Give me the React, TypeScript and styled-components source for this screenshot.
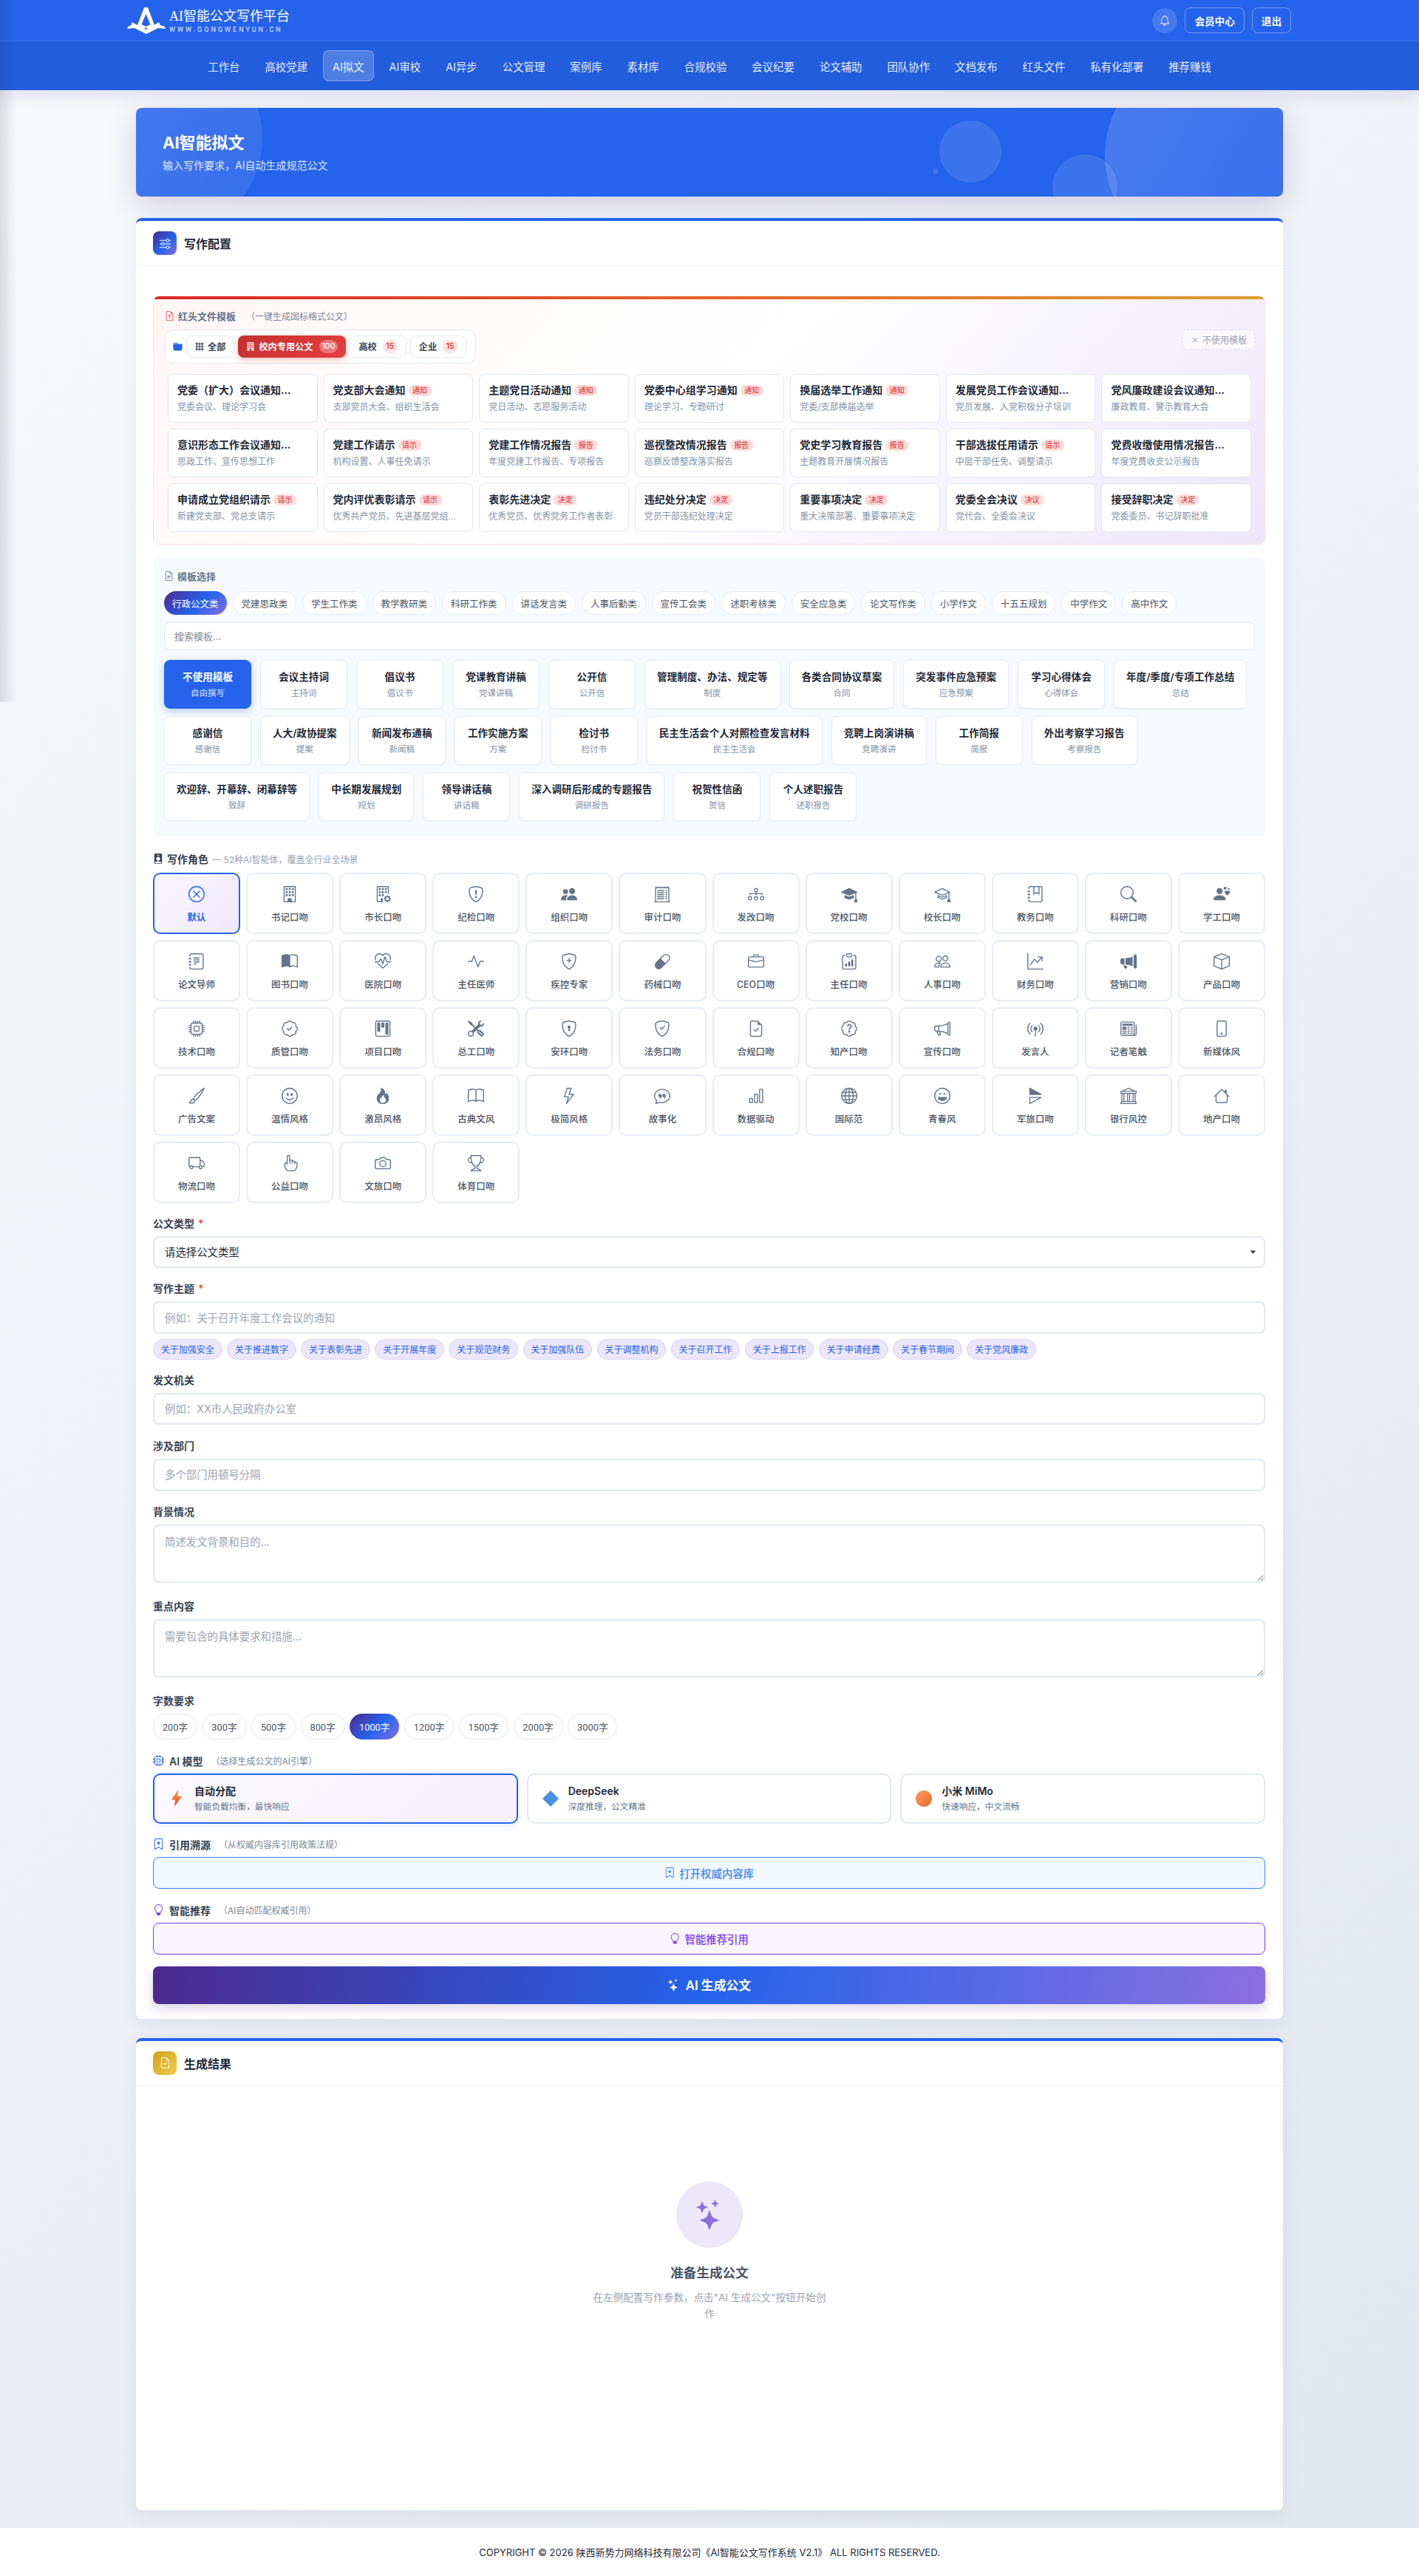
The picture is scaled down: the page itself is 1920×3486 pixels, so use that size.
import React from 'react'
import styled, { createGlobalStyle } from 'styled-components'
import type { IconType } from 'react-icons'
import {
    BsActivity, BsBank, BsBarChart, BsBell, BsBook, BsBookHalf, BsBookmarkStar, BsBox, BsBriefcase, BsBroadcastPin,
    BsBrush, BsBuilding, BsBuildingFill, BsBuildingGear, BsCamera, BsCapsule, BsCaretDownFill, BsChatQuote,
    BsClipboardData, BsCpu, BsDiagram3, BsEmojiLaughing, BsEmojiSmile, BsFileEarmarkArrowUp, BsFileEarmarkCheck,
    BsFileEarmarkText, BsFire, BsFolderFill, BsGlobe, BsGraphUpArrow, BsGrid3X3GapFill, BsHandIndex, BsHeartPulse,
    BsHouse, BsJournalBookmark, BsJournalText, BsKanban, BsLightbulb, BsLightning, BsMegaphone, BsMegaphoneFill,
    BsMortarboard, BsMortarboardFill, BsNewspaper, BsPatchCheck, BsPatchQuestion, BsPeople, BsPeopleFill,
    BsPersonBadgeFill, BsPersonHearts, BsPhone, BsReceiptCutoff, BsSearch, BsShieldCheck, BsShieldExclamation,
    BsShieldLock, BsShieldPlus, BsSliders, BsStars, BsSymmetryHorizontal, BsTools, BsTrophy, BsTruck, BsX, BsXCircle,
} from 'react-icons/bs'

// ─── Global ───────────────────────────────────────────────────────────────────

const GlobalStyle = createGlobalStyle`
    * { box-sizing: border-box; }
    html, body { margin: 0; padding: 0; }
    body {
        font-family: Inter, 'Noto Sans CJK SC', sans-serif;
        color: #1f2937;
    }
    input, select, textarea, button { font-family: inherit; }
    ::placeholder { color: #9ca3af; opacity: 1; }
`

const Page = styled.div`
    position: relative;
    height: 3486px;
    overflow: hidden;
    background: linear-gradient(135deg, #f8fafc 0%, #e2e6ee 100%);
    display: flex;
    flex-direction: column;
`

const EdgeShade = styled.div`
    position: absolute;
    left: 0;
    top: 0;
    width: 22px;
    height: 950px;
    background: linear-gradient(90deg, rgba(30, 41, 59, 0.14), rgba(30, 41, 59, 0));
    pointer-events: none;
    z-index: 5;
`

// ─── Header ───────────────────────────────────────────────────────────────────

const Header = styled.header`
    background: #2563eb;
    box-shadow: 0 4px 24px rgba(67, 56, 160, 0.16);
    color: #fff;
`

const TopBar = styled.div`
    height: 56px;
    padding: 0 173px 0 172px;
    display: flex;
    align-items: center;
    justify-content: space-between;
    border-bottom: 1px solid rgba(255, 255, 255, 0.12);
`

const Brand = styled.div`
    display: flex;
    align-items: center;
    gap: 5px;
`

const BrandText = styled.div`
    display: flex;
    flex-direction: column;
`

const BrandName = styled.div`
    font-size: 18px;
    line-height: 24px;
    font-family: 'Liberation Serif', 'Noto Sans CJK SC', serif;
    font-weight: 400;
    white-space: nowrap;
`

const BrandUrl = styled.div`
    font-size: 9px;
    line-height: 12px;
    letter-spacing: 3.05px;
    font-family: Roboto, sans-serif;
    opacity: 0.9;
    white-space: nowrap;
`

const TopActions = styled.div`
    display: flex;
    align-items: center;
    gap: 10px;
`

const BellButton = styled.button`
    width: 34px;
    height: 34px;
    border: none;
    border-radius: 50%;
    background: rgba(255, 255, 255, 0.14);
    color: #fff;
    display: flex;
    align-items: center;
    justify-content: center;
    font-size: 14px;
    padding: 0;
`

const HeadButton = styled.button`
    height: 35px;
    padding: 0 12px;
    border: 1.5px solid rgba(255, 255, 255, 0.35);
    border-radius: 8px;
    background: transparent;
    color: #fff;
    font-size: 13.6px;
    font-weight: 600;
    white-space: nowrap;
`

const Nav = styled.nav`
    height: 66px;
    background: #225ddd;
    display: flex;
    align-items: center;
    justify-content: center;
    gap: 8px;
`

const NavItem = styled.a<{ $active?: boolean }>`
    height: 42px;
    padding: 0 12px;
    display: flex;
    align-items: center;
    font-size: 14.4px;
    color: rgba(255, 255, 255, 0.92);
    border-radius: 8px;
    white-space: nowrap;
    border: 1px solid ${p => p.$active ? 'rgba(255, 255, 255, 0.3)' : 'transparent'};
    background: ${p => p.$active ? 'rgba(255, 255, 255, 0.2)' : 'transparent'};
`

// ─── Main ─────────────────────────────────────────────────────────────────────

const Main = styled.main`
    flex: 1;
    padding: 24px 184px 0;
`

const Hero = styled.section`
    position: relative;
    height: 120px;
    padding: 32px 36px;
    background: #2563eb;
    border-radius: 8px;
    overflow: hidden;
    color: #fff;
`

const HeroShadow = styled.div`
    margin-bottom: 29px;
    border-radius: 8px;
    box-shadow: 0 12px 40px rgba(76, 42, 142, 0.2);
`

const HeroCircle = styled.span<{ $x: number; $y: number; $size: number; $faded?: boolean }>`
    position: absolute;
    left: ${p => p.$x - p.$size / 2}px;
    top: ${p => p.$y - p.$size / 2}px;
    width: ${p => p.$size}px;
    height: ${p => p.$size}px;
    border-radius: 50%;
    background: ${p => p.$faded
        ? 'linear-gradient(120deg, rgba(255, 255, 255, 0.17), rgba(255, 255, 255, 0.07))'
        : 'rgba(255, 255, 255, 0.11)'};
`

const HeroTitle = styled.h1`
    position: relative;
    margin: 0 0 5px;
    font-size: 22px;
    line-height: 31px;
    font-weight: 700;
`

const HeroSub = styled.p`
    position: relative;
    margin: 0;
    font-size: 14px;
    line-height: 20px;
    opacity: 0.85;
`

const Card = styled.section`
    background: #fff;
    border-top: 4px solid #2563eb;
    border-radius: 8px;
    box-shadow: 0 6px 24px rgba(60, 60, 120, 0.08);
`

const CardHead = styled.div`
    height: 61px;
    padding: 0 23px;
    display: flex;
    align-items: center;
    gap: 10px;
    border-bottom: 1px solid #eef0f4;
`

const CardIcon = styled.span<{ $gold?: boolean }>`
    width: 32px;
    height: 32px;
    border-radius: 8px;
    color: #fff;
    font-size: 15px;
    display: flex;
    align-items: center;
    justify-content: center;
    background: ${p => p.$gold
        ? 'linear-gradient(135deg, #d4a017, #f0cb4f)'
        : 'linear-gradient(135deg, #4c2a8e, #2563eb 55%, #8a6be0)'};
`

const CardTitle = styled.h2`
    margin: 0;
    font-size: 16px;
    font-weight: 600;
    color: #1f2937;
`

const ConfigBody = styled.div`
    padding: 40px 24px 20px 23px;
`

// ─── Red header templates ─────────────────────────────────────────────────────

const RedBox = styled.div`
    position: relative;
    height: 337px;
    margin-bottom: 18px;
    padding: 16px 18px 0 15px;
    border: 1px solid #fde2e2;
    border-radius: 8px;
    overflow: hidden;
    background: linear-gradient(135deg, #fff6f6 0%, #ffffff 50%, #ece6fa 100%);
`

const RedBar = styled.span`
    position: absolute;
    left: 0;
    right: 0;
    top: 0;
    height: 4px;
    background: linear-gradient(90deg, #dc2626, #e4682a 55%, #d9a032);
`

const SectionLabel = styled.div`
    display: flex;
    align-items: center;
    gap: 5px;
    height: 20px;
    font-size: 13px;
    font-weight: 600;
    color: #64748b;
`

const LabelNote = styled.span`
    margin-left: 9px;
    font-size: 12px;
    font-weight: 400;
    color: #7b8798;
`

const FilterRow = styled.div`
    display: flex;
    align-items: flex-start;
    justify-content: space-between;
    margin-top: 9px;
`

const FilterBar = styled.div`
    height: 46px;
    padding: 0 12px 0 10px;
    display: flex;
    align-items: center;
    gap: 5px;
    background: #fff;
    border: 1px solid #e2e8f0;
    border-radius: 12px;
    color: #2563eb;
    font-size: 13px;
`

const FilterTab = styled.button<{ $active?: boolean }>`
    height: 30px;
    padding: 0 11px;
    display: flex;
    align-items: center;
    gap: 5px;
    font-size: 12.2px;
    font-weight: 600;
    white-space: nowrap;
    border-radius: 8px;
    border: ${p => p.$active ? 'none' : '1px solid #e2e8f0'};
    background: ${p => p.$active ? 'linear-gradient(135deg, #c53030, #e53e3e)' : '#fff'};
    color: ${p => p.$active ? '#fff' : '#374151'};
    box-shadow: ${p => p.$active ? '0 3px 8px rgba(220, 38, 38, 0.3)' : 'none'};
`

const TabIcon = styled.span`
    display: flex;
    font-size: 12px;
    color: inherit;
    opacity: 0.85;
`

const TabCount = styled.span<{ $active?: boolean }>`
    min-width: 20px;
    height: 18px;
    margin-left: 3px;
    padding: 0 4px;
    border-radius: 9px;
    font-size: 10.5px;
    font-weight: 500;
    line-height: 18px;
    text-align: center;
    background: ${p => p.$active ? 'rgba(255, 255, 255, 0.3)' : '#fee2e2'};
    color: ${p => p.$active ? '#fff' : '#dc2626'};
`

const NoTemplate = styled.button`
    height: 27px;
    margin-right: -5px;
    padding: 0 10px 0 8px;
    display: flex;
    align-items: center;
    gap: 2px;
    background: rgba(255, 255, 255, 0.55);
    border: 1px dashed #dce2ea;
    border-radius: 6px;
    color: #9ca3af;
    font-size: 12px;
`

const RedGrid = styled.div`
    display: grid;
    grid-template-columns: repeat(7, minmax(0, 1fr));
    grid-auto-rows: 66px;
    gap: 8px;
    margin: 14px 0 0 4px;
`

const RedCard = styled.div`
    padding: 0 12px;
    display: flex;
    flex-direction: column;
    justify-content: center;
    gap: 4px;
    background: #fff;
    border: 1px solid #e2e8f0;
    border-radius: 8px;
`

const RedTitle = styled.div`
    display: flex;
    align-items: center;
    gap: 4px;
    font-size: 14px;
    line-height: 20px;
    font-weight: 600;
    color: #1f2937;
    white-space: nowrap;
`

const RedBadge = styled.span`
    padding: 0 5.5px;
    border-radius: 7px;
    font-size: 10px;
    line-height: 15px;
    font-weight: 400;
    background: #fddcdc;
    color: #dc2626;
`

const RedSub = styled.div`
    font-size: 12px;
    line-height: 18px;
    color: #8492a6;
    white-space: nowrap;
`

// ─── Template picker ──────────────────────────────────────────────────────────

const PickerBox = styled.div`
    height: 377px;
    margin-bottom: 20px;
    padding: 14px 14px 0 15px;
    background: #f6f9fd;
    border-radius: 10px;
`

const Pills = styled.div`
    display: flex;
    gap: 8px;
    margin-top: 11px;
`

const Pill = styled.button<{ $active?: boolean }>`
    height: 32px;
    padding: 0 11px;
    font-size: 12.5px;
    white-space: nowrap;
    border-radius: 16px;
    border: ${p => p.$active ? 'none' : '1px solid #e8edf4'};
    background: ${p => p.$active ? 'linear-gradient(135deg, #4c2a8e, #2563eb 55%, #8a6be0)' : '#fff'};
    color: ${p => p.$active ? '#fff' : '#4b5563'};
`

const SearchInput = styled.input`
    display: block;
    width: 100%;
    height: 38px;
    margin-top: 10px;
    padding: 0 13px;
    background: #fff;
    border: 1px solid #e2e8f0;
    border-radius: 8px;
    font-size: 13px;
    outline: none;

    &::placeholder { color: #858b94; }
`

const TemplateWrap = styled.div`
    display: flex;
    flex-wrap: wrap;
    gap: 10px 12px;
    margin-top: 13px;
`

const TemplateCard = styled.div<{ $active?: boolean }>`
    min-width: 118px;
    height: 66px;
    padding: 0 16px;
    display: flex;
    flex-direction: column;
    align-items: center;
    justify-content: center;
    gap: 4px;
    border-radius: 8px;
    border: 1px solid ${p => p.$active ? '#2563eb' : '#e8edf4'};
    background: ${p => p.$active ? '#2563eb' : '#fff'};
    box-shadow: ${p => p.$active ? '0 3px 10px rgba(37, 99, 235, 0.3)' : '0 1px 3px rgba(15, 23, 42, 0.04)'};
`

const TemplateName = styled.div<{ $active?: boolean }>`
    font-size: 13.6px;
    line-height: 20px;
    font-weight: 600;
    white-space: nowrap;
    color: ${p => p.$active ? '#fff' : '#1f2937'};
`

const TemplateSub = styled.div<{ $active?: boolean }>`
    font-size: 11.5px;
    line-height: 16px;
    color: ${p => p.$active ? 'rgba(255, 255, 255, 0.85)' : '#8492a6'};
`

// ─── Roles ────────────────────────────────────────────────────────────────────

const RoleLabel = styled.div`
    display: flex;
    align-items: center;
    gap: 5px;
    height: 20px;
    font-size: 14px;
    font-weight: 600;
    color: #374151;
`

const RoleNote = styled.span`
    font-size: 12px;
    font-weight: 400;
    color: #94a3b8;
`

const RoleGrid = styled.div`
    display: grid;
    grid-template-columns: repeat(12, minmax(0, 1fr));
    grid-auto-rows: 83px;
    gap: 8px;
    margin: 9px 0 18px;
`

const RoleCard = styled.div<{ $active?: boolean }>`
    padding-top: 16px;
    display: flex;
    flex-direction: column;
    align-items: center;
    gap: 11px;
    border-radius: 10px;
    border: 2px solid ${p => p.$active ? '#2563eb' : '#e8ecf3'};
    background: ${p => p.$active ? 'linear-gradient(135deg, #faf7ff, #efe8fd)' : '#fff'};
    color: ${p => p.$active ? '#2563eb' : '#64748b'};
    font-size: 22px;
`

const RoleIcon = styled.span`
    display: flex;
    height: 22px;
`

const RoleName = styled.div<{ $active?: boolean }>`
    font-size: 12.5px;
    line-height: 20px;
    font-weight: ${p => p.$active ? 600 : 500};
    color: ${p => p.$active ? '#2563eb' : '#4b5563'};
`

// ─── Form ─────────────────────────────────────────────────────────────────────

const Group = styled.div<{ $gap?: number }>`
    margin-bottom: ${p => p.$gap ?? 18}px;
`

const Label = styled.label`
    display: block;
    height: 20px;
    margin-bottom: 7px;
    font-size: 14px;
    line-height: 20px;
    font-weight: 600;
    color: #374151;
`

const Required = styled.span`
    margin-left: 5px;
    color: #ef4444;
`

const SelectWrap = styled.div`
    position: relative;
    color: #374151;
    font-size: 9px;

    svg {
        position: absolute;
        right: 12px;
        top: 17px;
        pointer-events: none;
    }
`

const Select = styled.select`
    display: block;
    width: 100%;
    height: 43.4px;
    padding: 0 14px;
    appearance: none;
    background: #fff;
    border: 2px solid #e2e8f0;
    border-radius: 8px;
    font-size: 14.4px;
    color: #1f2937;
    outline: none;
`

const Input = styled.input`
    display: block;
    width: 100%;
    height: 43.4px;
    padding: 0 14px;
    background: #fff;
    border: 2px solid #e2e8f0;
    border-radius: 8px;
    font-size: 14.4px;
    outline: none;
`

const TextArea = styled.textarea`
    display: block;
    width: 100%;
    height: 79.5px;
    padding: 11px 14px;
    background: #fff;
    border: 2px solid #e2e8f0;
    border-radius: 8px;
    font-size: 14.4px;
    line-height: 1.5;
    outline: none;
`

const Tags = styled.div`
    display: flex;
    gap: 6.5px;
    margin-top: 7px;
`

const Tag = styled.span`
    height: 28px;
    padding: 0 9.8px;
    display: flex;
    align-items: center;
    font-size: 12px;
    white-space: nowrap;
    color: #2563eb;
    background: #ece6fa;
    border: 1px solid #dcd2f3;
    border-radius: 14px;
`

const WordOptions = styled.div`
    display: flex;
    gap: 6.6px;
`

const WordOption = styled.button<{ $active?: boolean }>`
    height: 35px;
    padding: 0 ${p => p.$active ? 12.8 : 11.8}px;
    font-family: Roboto, 'Noto Sans CJK SC', sans-serif;
    font-size: 12.8px;
    border-radius: 17.5px;
    white-space: nowrap;
    border: ${p => p.$active ? 'none' : '1px solid #e5e9f1'};
    background: ${p => p.$active ? 'linear-gradient(135deg, #4c2a8e, #2563eb 55%, #8a6be0)' : '#fff'};
    color: ${p => p.$active ? '#fff' : '#4b5563'};
`

const ExtraLabel = styled.div<{ $color: string }>`
    display: flex;
    align-items: center;
    gap: 7px;
    height: 20px;
    margin-bottom: 7px;
    font-size: 14px;
    font-weight: 600;
    color: #374151;

    svg { color: ${p => p.$color}; font-size: 15px; }
`

const ExtraNote = styled.span`
    margin-left: 4px;
    font-size: 12px;
    font-weight: 400;
    color: #7b8798;
`

const ModelGrid = styled.div`
    display: grid;
    grid-template-columns: repeat(3, minmax(0, 1fr));
    gap: 12px;
`

const ModelCard = styled.div<{ $active?: boolean }>`
    height: 68px;
    padding: 0 18px;
    display: flex;
    align-items: center;
    gap: 12px;
    border-radius: 10px;
    border: 2px solid ${p => p.$active ? '#2563eb' : '#e2e8f0'};
    background: ${p => p.$active ? 'linear-gradient(135deg, #fbf9ff, #f5f1fd)' : '#fff'};
    box-shadow: ${p => p.$active ? '0 4px 12px rgba(37, 99, 235, 0.1)' : 'none'};
`

const ModelMark = styled.span`
    width: 24px;
    height: 24px;
    display: flex;
    flex-shrink: 0;
    align-items: center;
    justify-content: center;
`

const ModelDot = styled.span`
    width: 22px;
    height: 22px;
    border-radius: 50%;
    background: linear-gradient(135deg, #f9a05c, #f0652f);
`

const ModelName = styled.div`
    font-size: 14px;
    line-height: 20px;
    font-weight: 600;
    color: #1f2937;
`

const ModelSub = styled.div`
    margin-top: 3px;
    font-size: 11.7px;
    line-height: 16px;
    color: #64748b;
`

const OutlineButton = styled.button<{ $color: string; $bg: string }>`
    width: 100%;
    height: 43px;
    display: flex;
    align-items: center;
    justify-content: center;
    gap: 6px;
    font-size: 14.4px;
    font-weight: 500;
    border-radius: 8px;
    color: ${p => p.$color};
    background: ${p => p.$bg};
    border: 1.5px solid ${p => p.$color};
`

const GenerateButton = styled.button`
    width: 100%;
    height: 51px;
    display: flex;
    align-items: center;
    justify-content: center;
    gap: 8px;
    border: none;
    border-radius: 8px;
    font-size: 16.8px;
    font-weight: 600;
    color: #fff;
    background: linear-gradient(100deg, #4c2a8e, #2563eb 50%, #8b6fe0);
    box-shadow: 0 6px 16px rgba(76, 42, 142, 0.2);
`

// ─── Result ───────────────────────────────────────────────────────────────────

const ResultCard = styled(Card)`
    margin-top: 26px;
`

const ResultBody = styled.div`
    height: 574px;
    padding-top: 129px;
    display: flex;
    flex-direction: column;
    align-items: center;
`

const EmptyCircle = styled.div`
    width: 90px;
    height: 90px;
    border-radius: 50%;
    background: #ede7fa;
    color: #8b6fe0;
    font-size: 40px;
    display: flex;
    align-items: center;
    justify-content: center;
`

const EmptyTitle = styled.h3`
    margin: 21px 0 9px;
    font-size: 17.6px;
    line-height: 26px;
    font-weight: 600;
    color: #4b5563;
`

const EmptyText = styled.p`
    width: 320px;
    margin: 0;
    font-size: 13.6px;
    line-height: 22px;
    text-align: center;
    color: #9ca3af;
`

const Footer = styled.footer`
    height: 65px;
    flex-shrink: 0;
    background: #fff;
    display: flex;
    align-items: center;
    justify-content: center;
    font-size: 13px;
    color: #1f2937;
`

// ─── Data ─────────────────────────────────────────────────────────────────────

const navItems = ['工作台', '高校党建', 'AI拟文', 'AI审校', 'AI异步', '公文管理', '案例库', '素材库', '合规校验', '会议纪要', '论文辅助', '团队协作', '文档发布', '红头文件', '私有化部署', '推荐赚钱']

const redTemplates: [string, string, string?][] = [
    ['党委（扩大）会议通知...', '党委会议、理论学习会'],
    ['党支部大会通知', '支部党员大会、组织生活会', '通知'],
    ['主题党日活动通知', '党日活动、志愿服务活动', '通知'],
    ['党委中心组学习通知', '理论学习、专题研讨', '通知'],
    ['换届选举工作通知', '党委/支部换届选举', '通知'],
    ['发展党员工作会议通知...', '党员发展、入党积极分子培训'],
    ['党风廉政建设会议通知...', '廉政教育、警示教育大会'],
    ['意识形态工作会议通知...', '思政工作、宣传思想工作'],
    ['党建工作请示', '机构设置、人事任免请示', '请示'],
    ['党建工作情况报告', '年度党建工作报告、专项报告', '报告'],
    ['巡视整改情况报告', '巡察反馈整改落实报告', '报告'],
    ['党史学习教育报告', '主题教育开展情况报告', '报告'],
    ['干部选拔任用请示', '中层干部任免、调整请示', '请示'],
    ['党费收缴使用情况报告...', '年度党费收支公示报告'],
    ['申请成立党组织请示', '新建党支部、党总支请示', '请示'],
    ['党内评优表彰请示', '优秀共产党员、先进基层党组...', '请示'],
    ['表彰先进决定', '优秀党员、优秀党务工作者表彰', '决定'],
    ['违纪处分决定', '党员干部违纪处理决定', '决定'],
    ['重要事项决定', '重大决策部署、重要事项决定', '决定'],
    ['党委全会决议', '党代会、全委会决议', '决议'],
    ['接受辞职决定', '党委委员、书记辞职批准', '决定'],
]

const categories = ['行政公文类', '党建思政类', '学生工作类', '教学教研类', '科研工作类', '讲话发言类', '人事后勤类', '宣传工会类', '述职考核类', '安全应急类', '论文写作类', '小学作文', '十五五规划', '中学作文', '高中作文']

const templates: [string, string][] = [
    ['不使用模板', '自由撰写'], ['会议主持词', '主持词'], ['倡议书', '倡议书'], ['党课教育讲稿', '党课讲稿'],
    ['公开信', '公开信'], ['管理制度、办法、规定等', '制度'], ['各类合同协议草案', '合同'], ['突发事件应急预案', '应急预案'],
    ['学习心得体会', '心得体会'], ['年度/季度/专项工作总结', '总结'], ['感谢信', '感谢信'], ['人大/政协提案', '提案'],
    ['新闻发布通稿', '新闻稿'], ['工作实施方案', '方案'], ['检讨书', '检讨书'], ['民主生活会个人对照检查发言材料', '民主生活会'],
    ['竞聘上岗演讲稿', '竞聘演讲'], ['工作简报', '简报'], ['外出考察学习报告', '考察报告'], ['欢迎辞、开幕辞、闭幕辞等', '致辞'],
    ['中长期发展规划', '规划'], ['领导讲话稿', '讲话稿'], ['深入调研后形成的专题报告', '调研报告'], ['祝贺性信函', '贺信'],
    ['个人述职报告', '述职报告'],
]

const roles: [string, IconType][] = [
    ['默认', BsXCircle], ['书记口吻', BsBuilding], ['市长口吻', BsBuildingGear], ['纪检口吻', BsShieldExclamation],
    ['组织口吻', BsPeopleFill], ['审计口吻', BsReceiptCutoff], ['发改口吻', BsDiagram3], ['党校口吻', BsMortarboardFill],
    ['校长口吻', BsMortarboard], ['教务口吻', BsJournalBookmark], ['科研口吻', BsSearch], ['学工口吻', BsPersonHearts],
    ['论文导师', BsJournalText], ['图书口吻', BsBookHalf], ['医院口吻', BsHeartPulse], ['主任医师', BsActivity],
    ['疾控专家', BsShieldPlus], ['药械口吻', BsCapsule], ['CEO口吻', BsBriefcase], ['主任口吻', BsClipboardData],
    ['人事口吻', BsPeople], ['财务口吻', BsGraphUpArrow], ['营销口吻', BsMegaphoneFill], ['产品口吻', BsBox],
    ['技术口吻', BsCpu], ['质管口吻', BsPatchCheck], ['项目口吻', BsKanban], ['总工口吻', BsTools],
    ['安环口吻', BsShieldLock], ['法务口吻', BsShieldCheck], ['合规口吻', BsFileEarmarkCheck], ['知产口吻', BsPatchQuestion],
    ['宣传口吻', BsMegaphone], ['发言人', BsBroadcastPin], ['记者笔触', BsNewspaper], ['新媒体风', BsPhone],
    ['广告文案', BsBrush], ['温情风格', BsEmojiSmile], ['激昂风格', BsFire], ['古典文风', BsBook],
    ['极简风格', BsLightning], ['故事化', BsChatQuote], ['数据驱动', BsBarChart], ['国际范', BsGlobe],
    ['青春风', BsEmojiLaughing], ['军旅口吻', BsSymmetryHorizontal], ['银行风控', BsBank], ['地产口吻', BsHouse],
    ['物流口吻', BsTruck], ['公益口吻', BsHandIndex], ['文旅口吻', BsCamera], ['体育口吻', BsTrophy],
]

const topicTags = ['关于加强安全', '关于推进数字', '关于表彰先进', '关于开展年度', '关于规范财务', '关于加强队伍', '关于调整机构', '关于召开工作', '关于上报工作', '关于申请经费', '关于春节期间', '关于党风廉政']

const wordCounts = ['200字', '300字', '500字', '800字', '1000字', '1200字', '1500字', '2000字', '3000字']

// ─── Drawings ─────────────────────────────────────────────────────────────────

function LogoMark() {
    return (
        <svg width="52" height="36" viewBox="0 0 52 36" fill="#fff">
            <path fillRule="evenodd" d="M23 0h5l9 24-9.500 5-2-2-2 2L14 24zM25.500 9l-6 14 6 3 6-3z" />
            <path d="M7 20l5 3 13 7 13-7 5-3 1.500 3-1 .5L51 26l1 3-10-1-16 8-16-8-10 1 1-3 5.500-2.500-1-.5z" />
        </svg>
    )
}

function BoltMark() {
    return (
        <svg width="14" height="23" viewBox="0 0 14 23">
            <defs>
                <linearGradient id="bolt" x1="0" y1="0" x2="0" y2="1">
                    <stop offset="0" stopColor="#f9a03f" />
                    <stop offset="1" stopColor="#ef4423" />
                </linearGradient>
            </defs>
            <path d="M9 0 0 13.500h5L4 23l10-14H8.500z" fill="url(#bolt)" />
        </svg>
    )
}

function DiamondMark() {
    return (
        <svg width="22" height="22" viewBox="0 0 22 22">
            <path d="M11 0 22 11 11 22 0 11z" fill="#4a8fe2" />
        </svg>
    )
}

// ─── Component ────────────────────────────────────────────────────────────────

export default function App() {
    return (
        <Page>
            <GlobalStyle />
            <EdgeShade />
            <Header>
                <TopBar>
                    <Brand>
                        <LogoMark />
                        <BrandText>
                            <BrandName>AI智能公文写作平台</BrandName>
                            <BrandUrl>WWW.GONGWENYUN.CN</BrandUrl>
                        </BrandText>
                    </Brand>
                    <TopActions>
                        <BellButton><BsBell /></BellButton>
                        <HeadButton>会员中心</HeadButton>
                        <HeadButton>退出</HeadButton>
                    </TopActions>
                </TopBar>
                <Nav>
                    {navItems.map(item => (
                        <NavItem key={item} $active={item === 'AI拟文'}>{item}</NavItem>
                    ))}
                </Nav>
            </Header>
            <Main>
                <HeroShadow>
                    <Hero>
                        <HeroCircle $x={38} $y={41} $size={266} $faded />
                        <HeroCircle $x={1451} $y={64} $size={280} $faded />
                        <HeroCircle $x={1129} $y={59} $size={84} />
                        <HeroCircle $x={1284} $y={107} $size={88} />
                        <HeroCircle $x={1082} $y={86} $size={8} />
                        <HeroTitle>AI智能拟文</HeroTitle>
                        <HeroSub>输入写作要求，AI自动生成规范公文</HeroSub>
                    </Hero>
                </HeroShadow>

                <Card>
                    <CardHead>
                        <CardIcon><BsSliders /></CardIcon>
                        <CardTitle>写作配置</CardTitle>
                    </CardHead>
                    <ConfigBody>
                        <RedBox>
                            <RedBar />
                            <SectionLabel>
                                <BsFileEarmarkArrowUp color="#ef4444" size={13} />
                                红头文件模板
                                <LabelNote>（一键生成国标格式公文）</LabelNote>
                            </SectionLabel>
                            <FilterRow>
                                <FilterBar>
                                    <BsFolderFill />
                                    <FilterTab>
                                        <TabIcon><BsGrid3X3GapFill /></TabIcon>
                                        全部
                                    </FilterTab>
                                    <FilterTab $active>
                                        <TabIcon><BsBuildingFill /></TabIcon>
                                        校内专用公文
                                        <TabCount $active>100</TabCount>
                                    </FilterTab>
                                    <FilterTab>
                                        高校
                                        <TabCount>15</TabCount>
                                    </FilterTab>
                                    <FilterTab>
                                        企业
                                        <TabCount>15</TabCount>
                                    </FilterTab>
                                </FilterBar>
                                <NoTemplate><BsX size={16} />不使用模板</NoTemplate>
                            </FilterRow>
                            <RedGrid>
                                {redTemplates.map(([title, sub, badge]) => (
                                    <RedCard key={title}>
                                        <RedTitle>
                                            {title}
                                            {badge && <RedBadge>{badge}</RedBadge>}
                                        </RedTitle>
                                        <RedSub>{sub}</RedSub>
                                    </RedCard>
                                ))}
                            </RedGrid>
                        </RedBox>

                        <PickerBox>
                            <SectionLabel>
                                <BsFileEarmarkText size={13} />
                                模板选择
                            </SectionLabel>
                            <Pills>
                                {categories.map((c, i) => <Pill key={c} $active={i === 0}>{c}</Pill>)}
                            </Pills>
                            <SearchInput placeholder="搜索模板..." />
                            <TemplateWrap>
                                {templates.map(([name, sub], i) => (
                                    <TemplateCard key={name} $active={i === 0}>
                                        <TemplateName $active={i === 0}>{name}</TemplateName>
                                        <TemplateSub $active={i === 0}>{sub}</TemplateSub>
                                    </TemplateCard>
                                ))}
                            </TemplateWrap>
                        </PickerBox>

                        <RoleLabel>
                            <BsPersonBadgeFill size={14} />
                            写作角色
                            <RoleNote>— 52种AI智能体，覆盖全行业全场景</RoleNote>
                        </RoleLabel>
                        <RoleGrid>
                            {roles.map(([name, Icon], i) => (
                                <RoleCard key={name} $active={i === 0}>
                                    <RoleIcon><Icon /></RoleIcon>
                                    <RoleName $active={i === 0}>{name}</RoleName>
                                </RoleCard>
                            ))}
                        </RoleGrid>

                        <Group>
                            <Label>公文类型<Required>*</Required></Label>
                            <SelectWrap>
                                <Select defaultValue="">
                                    <option value="">请选择公文类型</option>
                                </Select>
                                <BsCaretDownFill />
                            </SelectWrap>
                        </Group>
                        <Group>
                            <Label>写作主题<Required>*</Required></Label>
                            <Input placeholder="例如：关于召开年度工作会议的通知" />
                            <Tags>
                                {topicTags.map(t => <Tag key={t}>{t}</Tag>)}
                            </Tags>
                        </Group>
                        <Group $gap={19}>
                            <Label>发文机关</Label>
                            <Input placeholder="例如：XX市人民政府办公室" />
                        </Group>
                        <Group $gap={18.3}>
                            <Label>涉及部门</Label>
                            <Input placeholder="多个部门用顿号分隔" />
                        </Group>
                        <Group $gap={21.5}>
                            <Label>背景情况</Label>
                            <TextArea placeholder="简述发文背景和目的..." />
                        </Group>
                        <Group $gap={21.5}>
                            <Label>重点内容</Label>
                            <TextArea placeholder="需要包含的具体要求和措施..." />
                        </Group>
                        <Group $gap={19}>
                            <Label>字数要求</Label>
                            <WordOptions>
                                {wordCounts.map(w => <WordOption key={w} $active={w === '1000字'}>{w}</WordOption>)}
                            </WordOptions>
                        </Group>
                        <Group>
                            <ExtraLabel $color="#2563eb">
                                <BsCpu />
                                AI 模型
                                <ExtraNote>（选择生成公文的AI引擎）</ExtraNote>
                            </ExtraLabel>
                            <ModelGrid>
                                <ModelCard $active>
                                    <ModelMark><BoltMark /></ModelMark>
                                    <div>
                                        <ModelName>自动分配</ModelName>
                                        <ModelSub>智能负载均衡，最快响应</ModelSub>
                                    </div>
                                </ModelCard>
                                <ModelCard>
                                    <ModelMark><DiamondMark /></ModelMark>
                                    <div>
                                        <ModelName>DeepSeek</ModelName>
                                        <ModelSub>深度推理，公文精准</ModelSub>
                                    </div>
                                </ModelCard>
                                <ModelCard>
                                    <ModelMark><ModelDot /></ModelMark>
                                    <div>
                                        <ModelName>小米 MiMo</ModelName>
                                        <ModelSub>快速响应，中文流畅</ModelSub>
                                    </div>
                                </ModelCard>
                            </ModelGrid>
                        </Group>
                        <Group $gap={19}>
                            <ExtraLabel $color="#2563eb">
                                <BsBookmarkStar />
                                引用溯源
                                <ExtraNote>（从权威内容库引用政策法规）</ExtraNote>
                            </ExtraLabel>
                            <OutlineButton $color="#3b82f6" $bg="#f2f8ff">
                                <BsBookmarkStar />
                                打开权威内容库
                            </OutlineButton>
                        </Group>
                        <Group $gap={16}>
                            <ExtraLabel $color="#7c3aed">
                                <BsLightbulb />
                                智能推荐
                                <ExtraNote>（AI自动匹配权威引用）</ExtraNote>
                            </ExtraLabel>
                            <OutlineButton $color="#7c3aed" $bg="#f8f5fe">
                                <BsLightbulb />
                                智能推荐引用
                            </OutlineButton>
                        </Group>
                        <GenerateButton>
                            <BsStars />
                            AI 生成公文
                        </GenerateButton>
                    </ConfigBody>
                </Card>

                <ResultCard>
                    <CardHead>
                        <CardIcon $gold><BsFileEarmarkCheck /></CardIcon>
                        <CardTitle>生成结果</CardTitle>
                    </CardHead>
                    <ResultBody>
                        <EmptyCircle><BsStars /></EmptyCircle>
                        <EmptyTitle>准备生成公文</EmptyTitle>
                        <EmptyText>在左侧配置写作参数，点击"AI 生成公文"按钮开始创作</EmptyText>
                    </ResultBody>
                </ResultCard>
            </Main>
            <Footer>COPYRIGHT © 2026 陕西新势力网络科技有限公司《AI智能公文写作系统 V2.1》 ALL RIGHTS RESERVED.</Footer>
        </Page>
    )
}
